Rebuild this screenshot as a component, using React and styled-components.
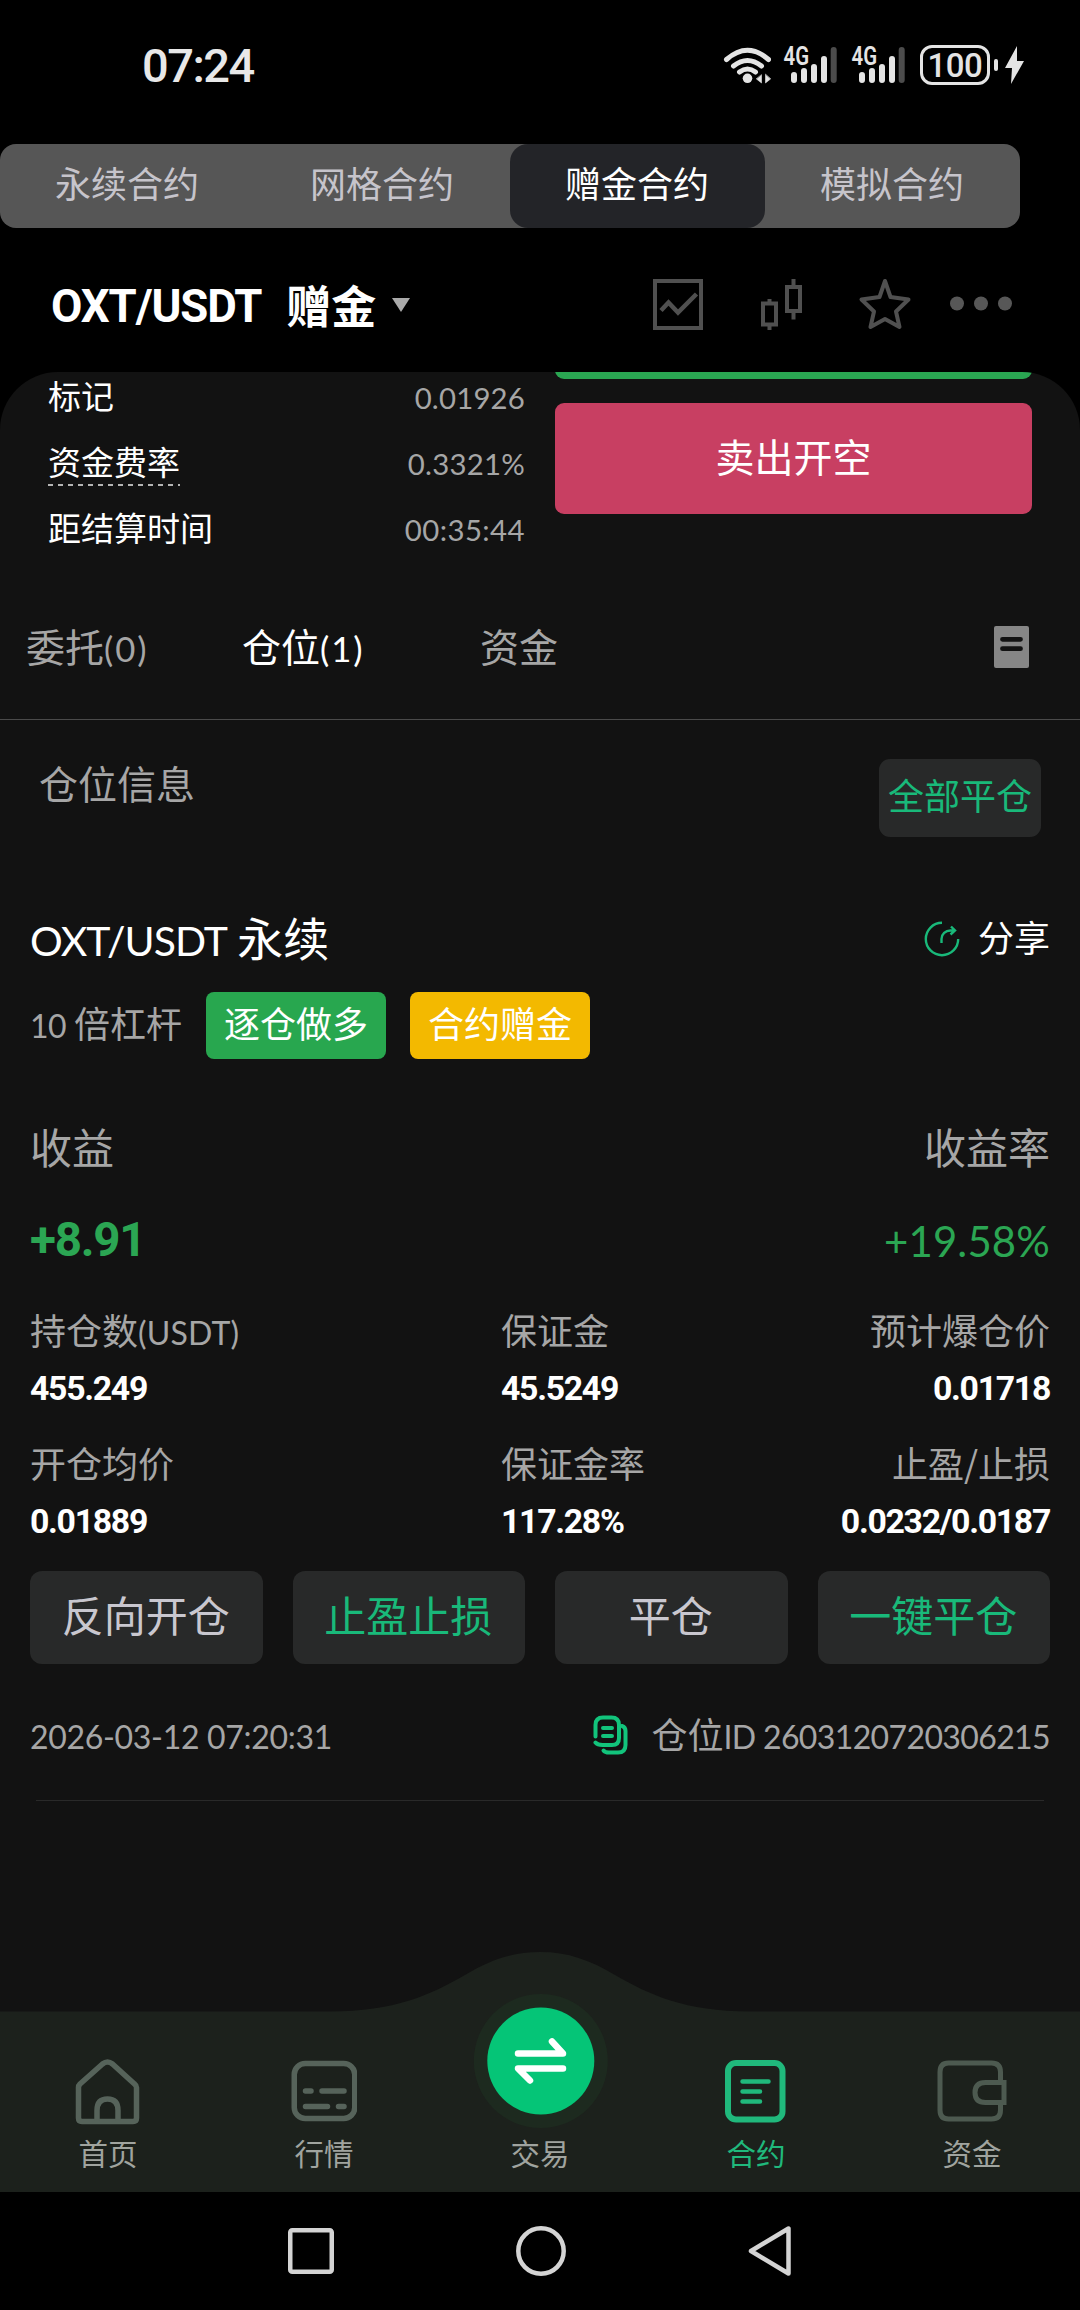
import styled, { createGlobalStyle } from "styled-components";

const GlobalStyle = createGlobalStyle`
* {
box-sizing: border-box;
margin: 0;
padding: 0;
}
body {
background: #000;
color: #fff;
font-family: "Noto Sans CJK SC", sans-serif;
}
button {
border: 0;
background: none;
color: inherit;
font-family: inherit;
}
svg {
display: block;
flex: none;
}
`

const Phone = styled.div`
display: flex;
flex-direction: column;
width: 1080px;
height: 2310px;
overflow: hidden;
background: #000;
`

/* latin text and digits are a bit smaller than the chinese around them */
const Num = styled.span`
font-family: Lato, sans-serif;
font-size: ${({ $size }) => $size || ".89em"};
line-height: 1;
letter-spacing: ${({ $ls }) => $ls || "-.008em"};
`

const StatusBar = styled.header`
display: flex;
justify-content: space-between;
align-items: center;
height: 144px;
padding: 0 56px 14px 142px;
`

const Clock = styled.span`
font: 500 47px/1 Roboto, sans-serif;
letter-spacing: -1.5px;
color: #e8e8e8;
`

const StatusIcons = styled.div`
display: flex;
align-items: center;
`

const Wifi = styled.svg`
margin-right: 11px;
`

const SignalSvg = styled.svg`
margin-right: 12px;
`

const Battery = styled.span`
display: flex;
align-items: center;
justify-content: center;
width: 70px;
height: 40px;
margin-left: 2px;
border: 3px solid #e4e4e4;
border-radius: 12px;
font: 500 33px/1 Roboto, sans-serif;
letter-spacing: -.5px;
color: #e4e4e4;
`

const BatteryTip = styled.span`
width: 4px;
height: 12px;
margin: 0 7px 0 4px;
border-radius: 2px;
background: #e4e4e4;
`

const ModeTabs = styled.nav`
display: flex;
width: 1020px;
height: 84px;
border-radius: 16px;
background: #565656;
`

const ModeTab = styled.button`
flex: 1;
padding: 0 1px 8px 0;
border-radius: 18px;
background: ${({ $on }) => $on ? "#232428" : "transparent"};
color: ${({ $on }) => $on ? "#fff" : "#c6c4cb"};
font-size: 36px;
`

const PairBar = styled.div`
display: flex;
align-items: center;
justify-content: space-between;
height: 144px;
padding: 8px 68px 0 51px;
`

const PairName = styled.h1`
display: flex;
align-items: center;
height: 64px;
font-size: 45px;
font-weight: 700;
`

const PairCode = styled.span`
margin: 5px 25px 0 0;
font: 700 45.5px/1 Roboto, sans-serif;
letter-spacing: -1.1px;
`

const Caret = styled.i`
margin: 2px 0 0 16px;
border: solid transparent;
border-width: 14px 9.5px 0;
border-top-color: #aaa;
`

const PairTools = styled.div`
display: flex;
align-items: center;
`

const Panel = styled.main`
display: flex;
flex-direction: column;
height: 1820px;
overflow: hidden;
border-radius: 58px 58px 0 0;
background: #121212;
`

const TradeArea = styled.section`
display: flex;
justify-content: space-between;
height: 188px;
padding: 0 48px;
`

const InfoList = styled.dl`
display: flex;
flex-direction: column;
justify-content: flex-end;
width: 477px;
`

const InfoRow = styled.div`
display: flex;
flex: none;
align-items: center;
justify-content: space-between;
height: 66px;
font-size: 33px;
dd { color: #a6a6a6; }
`

const InfoLabel = styled.dt`
position: relative;
${({ $dashed }) => $dashed && `
&::after {
content: "";
position: absolute;
inset: auto 0 -1px 0;
height: 2px;
background: repeating-linear-gradient(90deg, #b4b4b4 0 5px, transparent 5px 10px);
}
`}
`

const OpenButtons = styled.div`
display: flex;
flex-direction: column;
gap: 24px;
width: 477px;
margin-top: -104px;
`

const OpenButton = styled.button`
flex: none;
height: 111px;
padding-bottom: 8px;
border-radius: 9px;
background: ${({ $short }) => $short ? "#c83f62" : "#2aa652"};
font-size: 39px;
`

const OrderTabs = styled.div`
display: flex;
align-items: center;
height: 160px;
padding: 10px 51px 0 26px;
border-bottom: 1px solid #4a4a4a;
`

const OrderTab = styled.button`
width: ${({ $w }) => $w}px;
color: ${({ $on }) => $on ? "#fff" : "#a6a6a6"};
font-size: 39px;
text-align: left;
white-space: nowrap;
`

const DocIcon = styled.svg`
margin: 4px 0 0 auto;
`

const SectionHead = styled.div`
display: flex;
justify-content: space-between;
padding: 39px 39px 0;
`

const SectionTitle = styled.h2`
color: #a6a6a6;
font-size: 39px;
font-weight: 400;
line-height: 46px;
`

const CloseAll = styled.button`
width: 162px;
height: 78px;
padding-bottom: 8px;
border-radius: 11px;
background: #282929;
color: #19b97a;
font-size: 36px;
white-space: nowrap;
`

const Position = styled.article`
display: flex;
flex-direction: column;
padding: 64px 30px 0;
`

const Row = styled.div`
display: flex;
align-items: center;
justify-content: space-between;
`

const TitleRow = styled(Row)`
height: 69px;
font-size: 46px;
`

const Share = styled.button`
display: flex;
align-items: center;
gap: 18px;
color: #fff;
font-size: 36px;
svg { margin-top: 6px; }
`

const TagRow = styled.div`
display: flex;
gap: 24px;
margin-top: 22px;
font-size: 36px;
line-height: 60px;
color: #a6a6a6;
`

const Tag = styled.span`
height: 67px;
padding: 0 18px;
border-radius: 8px;
background: ${({ $bg }) => $bg};
color: #fff;
`

const ProfitLabels = styled(Row)`
height: 60px;
margin-top: 56px;
color: #a6a6a6;
font-size: 42px;
`

const ProfitValues = styled(Row)`
height: 60px;
margin-top: 35px;
color: #2ba653;
font-size: 45px;
`

const Profit = styled.strong`
padding-top: 2px;
font: 700 47.5px/1 Roboto, sans-serif;
letter-spacing: -1.2px;
`

const ProfitRate = styled.span`
padding-bottom: 6px;
`

const Stats = styled.dl`
display: grid;
grid-template-columns: 471px 1fr 1fr;
row-gap: 24px;
margin-top: 33px;
`

const Stat = styled.div`
&:nth-child(3n) { text-align: right; }
dt {
height: 52px;
color: #a6a6a6;
font-size: 36px;
line-height: 52px;
white-space: nowrap;
}
dd {
display: block;
margin-top: 9px;
font: 700 33.8px/49px Roboto, sans-serif;
letter-spacing: -1.3px;
height: 48px;
}
`

const Actions = styled.div`
display: grid;
grid-template-columns: repeat(4, 1fr);
gap: 30px;
margin-top: 26px;
`

const Action = styled.button`
height: 93px;
padding: 0 1px 8px 0;
border-radius: 12px;
background: #282929;
color: ${({ $green }) => $green ? "#19b97a" : "#c9c7cf"};
font-size: 42px;
`

const PositionFoot = styled(Row)`
height: 60px;
margin-top: 39px;
color: #a6a6a6;
font-size: 36px;
`

const PositionId = styled.span`
display: flex;
align-items: center;
gap: 23px;
svg { margin-top: 3px; }
`

const Line = styled.hr`
height: 1px;
margin: 37px 6px 0;
border: 0;
background: #292929;
`

const NavBar = styled.nav`
position: relative;
display: flex;
height: 240px;
margin-top: auto;
`

const Wave = styled.svg`
position: absolute;
inset: 0;
`

const NavItem = styled.a`
position: relative;
display: flex;
flex: 1;
flex-direction: column;
align-items: center;
justify-content: flex-end;
padding-bottom: 18px;
color: ${({ $on }) => $on ? "#20b97c" : "#a0a49f"};
font-size: 29.5px;
line-height: 44px;
svg { margin-bottom: ${({ $mid }) => $mid ? 1 : 5}px; }
`

const SystemBar = styled.footer`
display: flex;
align-items: center;
justify-content: center;
gap: 182px;
height: 118px;
`

const Signal = () => (
    <SignalSvg width="56" height="46" viewBox="783 41 56 46" fill="none" stroke="#e4e4e4" strokeWidth="6" strokeLinecap="round">
        <text x="784.500" y="64" fill="#e4e4e4" stroke="none" fontFamily="Roboto" fontWeight="600" fontSize="25" textLength="25.500" lengthAdjust="spacingAndGlyphs">4G</text>
        <path d="M795 74v5M805 70v9M815 66v13M825 58v21" />
        <path d="M834.7 49v30" stroke="#4c4c4c" />
    </SignalSvg>
)

const WifiIcon = () => (
    <Wifi width="48" height="38" viewBox="722 45 48 38" fill="none" stroke="#e4e4e4" strokeWidth="5" strokeLinecap="round">
        <path d="M725.500 58.500Q746.500 40 767.500 58.500M732.500 65Q746.500 54 760.500 65M738.500 71Q746.500 65 754.500 71" />
        <circle cx="746.500" cy="77.300" r="4.800" fill="#e4e4e4" stroke="none" />
        <path d="M760.500 74v8l-5-4zM764.500 73.500v8.500l5-4z" fill="#e4e4e4" strokeWidth=".6" />
    </Wifi>
)

const PairIcons = () => (
    <PairTools>
        <svg width="360" height="54" viewBox="652 277 360 54" fill="none" stroke="#505050" strokeWidth="4">
            <rect x="655" y="281" width="46" height="47" />
            <path d="M661 310.500L668.500 302.500L678 312.500L696.500 294" strokeWidth="4.500" />
            <path d="M763 303.500h13v21h-13zM769.500 299v4M769.500 325v5" />
            <path d="M787 287h13v24h-13zM793.500 279v8M793.500 311v8.500" />
            <path d="M885 281L890.500 297L908.500 299.500L896 311.500L899.500 327L885 319L870.500 327L874 311.500L861.500 299.500L879.500 297Z" strokeLinejoin="round" />
            <g fill="#575757" stroke="none">
                <circle cx="957" cy="303.500" r="7" />
                <circle cx="981" cy="303.500" r="7" />
                <circle cx="1005" cy="303.500" r="7" />
            </g>
        </svg>
    </PairTools>
)

const ShareIcon = () => (
    <svg width="36" height="36" viewBox="0 0 36 36" fill="none" stroke="#19b97a" strokeWidth="2.400">
        <path d="M18 1.800A16.200 16.200 0 1 0 34.200 18" />
        <path d="M17.500 22v-4c0-5 4-8.500 9-8.500h4M27 5.500l4 4-4.500 4" />
    </svg>
)

const CopyIcon = () => (
    <svg width="35" height="40" viewBox="0 0 35 40" fill="none" stroke="#12c47c" strokeWidth="4" strokeLinecap="round">
        <path d="M2.500 21.500V10q0-7.500 7.500-7.500h8.500q7.500 0 7.500 7.500v13q0 7-7 7h-9.500q-5 0-7-2.500" />
        <path d="M29 11q3.500 1 3.500 5v14q0 7.500-7.500 7.500h-9q-4 0-5.500-2" />
        <path d="M10 13h9M10 21h9" />
    </svg>
)

const icons = {
    home: (
        <svg width="66" height="66" viewBox="0 0 66 66" fill="none" stroke="#56635a" strokeWidth="5.500" strokeLinejoin="round">
            <path d="M3.500 28.500q0-2 1.500-3.500L27.500 5q5-4 10 0l22 20q2 1.500 2 3.500V59q0 3.500-3.500 3.500h-51Q3.500 62.500 3.500 59z" />
            <path d="M22 62V51.500q0-11.500 10.500-11.500t10.500 11.500V62" />
        </svg>
    ),
    market: (
        <svg width="66" height="66" viewBox="0 0 66 66" fill="none" stroke="#56635a" strokeWidth="5.500" strokeLinecap="round">
            <rect x="3.250" y="4.500" width="60.500" height="55" rx="11" />
            <path d="M14.500 32h5.500M31 32h22M14.500 47.500h22M47.500 47.500h5.500" />
        </svg>
    ),
    trade: (
        <svg width="136" height="136" viewBox="-68 -68 136 136" fill="none" stroke="#fff" strokeWidth="6.500" strokeLinecap="round" strokeLinejoin="round">
            <circle cx=".8" r="67" fill="#1d2a1f" stroke="none" />
            <circle cx=".8" r="53.500" fill="#05c577" stroke="none" />
            <path d="M-22 -7.500H23L12 -19.500M23 7.500H-22L-10 19.500" />
        </svg>
    ),
    contract: (
        <svg width="66" height="66" viewBox="0 0 66 66" fill="none" stroke="#20b97c" strokeWidth="6" strokeLinecap="round">
            <rect x="5" y="4" width="54.500" height="56.500" rx="8" />
            <path d="M19.500 22.500h26M19.500 32.500h17.500M19.500 42.500h17.500" strokeWidth="4.500" />
        </svg>
    ),
    wallet: (
        <svg width="70" height="66" viewBox="0 0 70 66" fill="none" stroke="#4d5a50" strokeWidth="5">
            <path d="M63.500 24V13q0-9-9-9h-43Q3 4 3 13v38q0 9 8.500 9h43q9 0 9-9v-9" />
            <path d="M67 23.500H48.500q-10.500 0-10.500 10t10.500 10H67z" />
        </svg>
    ),
}

const DATA = {
    modes: ["永续合约", "网格合约", "赠金合约", "模拟合约"],
    stats: [
        { label: "持仓数", unit: "(USDT)", value: "455.249" },
        { label: "保证金", value: "45.5249" },
        { label: "预计爆仓价", value: "0.01718" },
        { label: "开仓均价", value: "0.01889" },
        { label: "保证金率", value: "117.28%" },
        { label: "止盈/止损", value: "0.0232/0.0187" },
    ],
    actions: ["反向开仓", "止盈止损", "平仓", "一键平仓"],
    nav: [
        { icon: "home", title: "首页" },
        { icon: "market", title: "行情" },
        { icon: "trade", title: "交易" },
        { icon: "contract", title: "合约" },
        { icon: "wallet", title: "资金" },
    ],
}

const Status = () => (
    <StatusBar>
        <Clock>07:24</Clock>
        <StatusIcons>
            <WifiIcon />
            <Signal />
            <Signal />
            <Battery>100</Battery>
            <BatteryTip />
            <svg width="19" height="38" viewBox="0 0 19 38" fill="#e4e4e4">
                <path d="M12 0L0 22h7L6 38 19 15h-7z" />
            </svg>
        </StatusIcons>
    </StatusBar>
)

const Trade = () => (
    <TradeArea>
        <InfoList>
            <InfoRow><InfoLabel>标记</InfoLabel><dd><Num $ls=".006em">0.01926</Num></dd></InfoRow>
            <InfoRow><InfoLabel $dashed>资金费率</InfoLabel><dd><Num $ls=".008em">0.3321%</Num></dd></InfoRow>
            <InfoRow><InfoLabel>距结算时间</InfoLabel><dd><Num $ls=".014em">00:35:44</Num></dd></InfoRow>
        </InfoList>
        <OpenButtons>
            <OpenButton />
            <OpenButton $short>卖出开空</OpenButton>
        </OpenButtons>
    </TradeArea>
)

const PositionCard = () => (
    <Position>
        <TitleRow>
            <span><Num $ls="-.023em">OXT/USDT</Num> 永续</span>
            <Share><ShareIcon />分享</Share>
        </TitleRow>
        <TagRow>
            <span><Num $ls="-.02em">10</Num> 倍杠杆</span>
            <Tag $bg="#28a74f">逐仓做多</Tag>
            <Tag $bg="#f3b900">合约赠金</Tag>
        </TagRow>
        <ProfitLabels><span>收益</span><span>收益率</span></ProfitLabels>
        <ProfitValues>
            <Profit>+8.91</Profit>
            <ProfitRate><Num $size=".93em" $ls=".004em">+19.58%</Num></ProfitRate>
        </ProfitValues>
        <Stats>
            {
                DATA.stats.map(it => (
                    <Stat key={it.label}>
                        <dt>{it.label}{it.unit && <Num $ls=".005em">{it.unit}</Num>}</dt>
                        <dd>{it.value}</dd>
                    </Stat>
                ))
            }
        </Stats>
        <Actions>
            {DATA.actions.map((it, idx) => <Action key={it} $green={idx % 2 === 1}>{it}</Action>)}
        </Actions>
        <PositionFoot>
            <span><Num $ls="-.01em">2026-03-12 07:20:31</Num></span>
            <PositionId>
                <CopyIcon />
                <span>仓位<Num $ls="-.02em">ID 2603120720306215</Num></span>
            </PositionId>
        </PositionFoot>
        <Line />
    </Position>
)

const BottomNav = () => (
    <NavBar>
        <Wave width="1080" height="240" viewBox="0 0 1080 240" fill="#1c211c">
            <path d="M0 59.500H330C395 59.500 430 43 465 23C490 8 512 0 540 0S590 8 615 23C650 43 685 59.500 750 59.500H1080V240H0Z" />
        </Wave>
        {
            DATA.nav.map(it => (
                <NavItem key={it.icon} $on={it.icon === "contract"} $mid={it.icon === "trade"}>
                    {icons[it.icon]}
                    {it.title}
                </NavItem>
            ))
        }
    </NavBar>
)

const App = () => {
    return (
        <Phone>
            <GlobalStyle />
            <Status />
            <ModeTabs>
                {DATA.modes.map(it => <ModeTab key={it} $on={it === "赠金合约"}>{it}</ModeTab>)}
            </ModeTabs>
            <PairBar>
                <PairName><PairCode>OXT/USDT</PairCode>赠金<Caret /></PairName>
                <PairIcons />
            </PairBar>
            <Panel>
                <Trade />
                <OrderTabs>
                    <OrderTab $w={216}>委托<Num $ls=".055em">(0)</Num></OrderTab>
                    <OrderTab $w={238} $on>仓位<Num $ls=".055em">(1)</Num></OrderTab>
                    <OrderTab $w={120}>资金</OrderTab>
                    <DocIcon width="35" height="42" viewBox="0 0 35 42">
                        <rect width="35" height="42" rx="2" fill="#868686" />
                        <path d="M8.500 13.300h18M8.500 22.700h18" stroke="#121212" strokeWidth="4.800" strokeLinecap="round" />
                    </DocIcon>
                </OrderTabs>
                <SectionHead>
                    <SectionTitle>仓位信息</SectionTitle>
                    <CloseAll>全部平仓</CloseAll>
                </SectionHead>
                <PositionCard />
                <BottomNav />
            </Panel>
            <SystemBar>
                <svg width="46" height="46" viewBox="0 0 46 46" fill="none" stroke="#d4d4d4" strokeWidth="4.500">
                    <rect x="2.250" y="2.250" width="41.500" height="41.500" rx="2" />
                </svg>
                <svg width="50" height="50" viewBox="0 0 50 50" fill="none" stroke="#d4d4d4" strokeWidth="4.500">
                    <circle cx="25" cy="25" r="22.700" />
                </svg>
                <svg width="44" height="52" viewBox="0 0 44 52" fill="none" stroke="#d4d4d4" strokeWidth="4.500" strokeLinejoin="round">
                    <path d="M40.500 3.500v45L3 26z" />
                </svg>
            </SystemBar>
        </Phone>
    )
}

export default App;
